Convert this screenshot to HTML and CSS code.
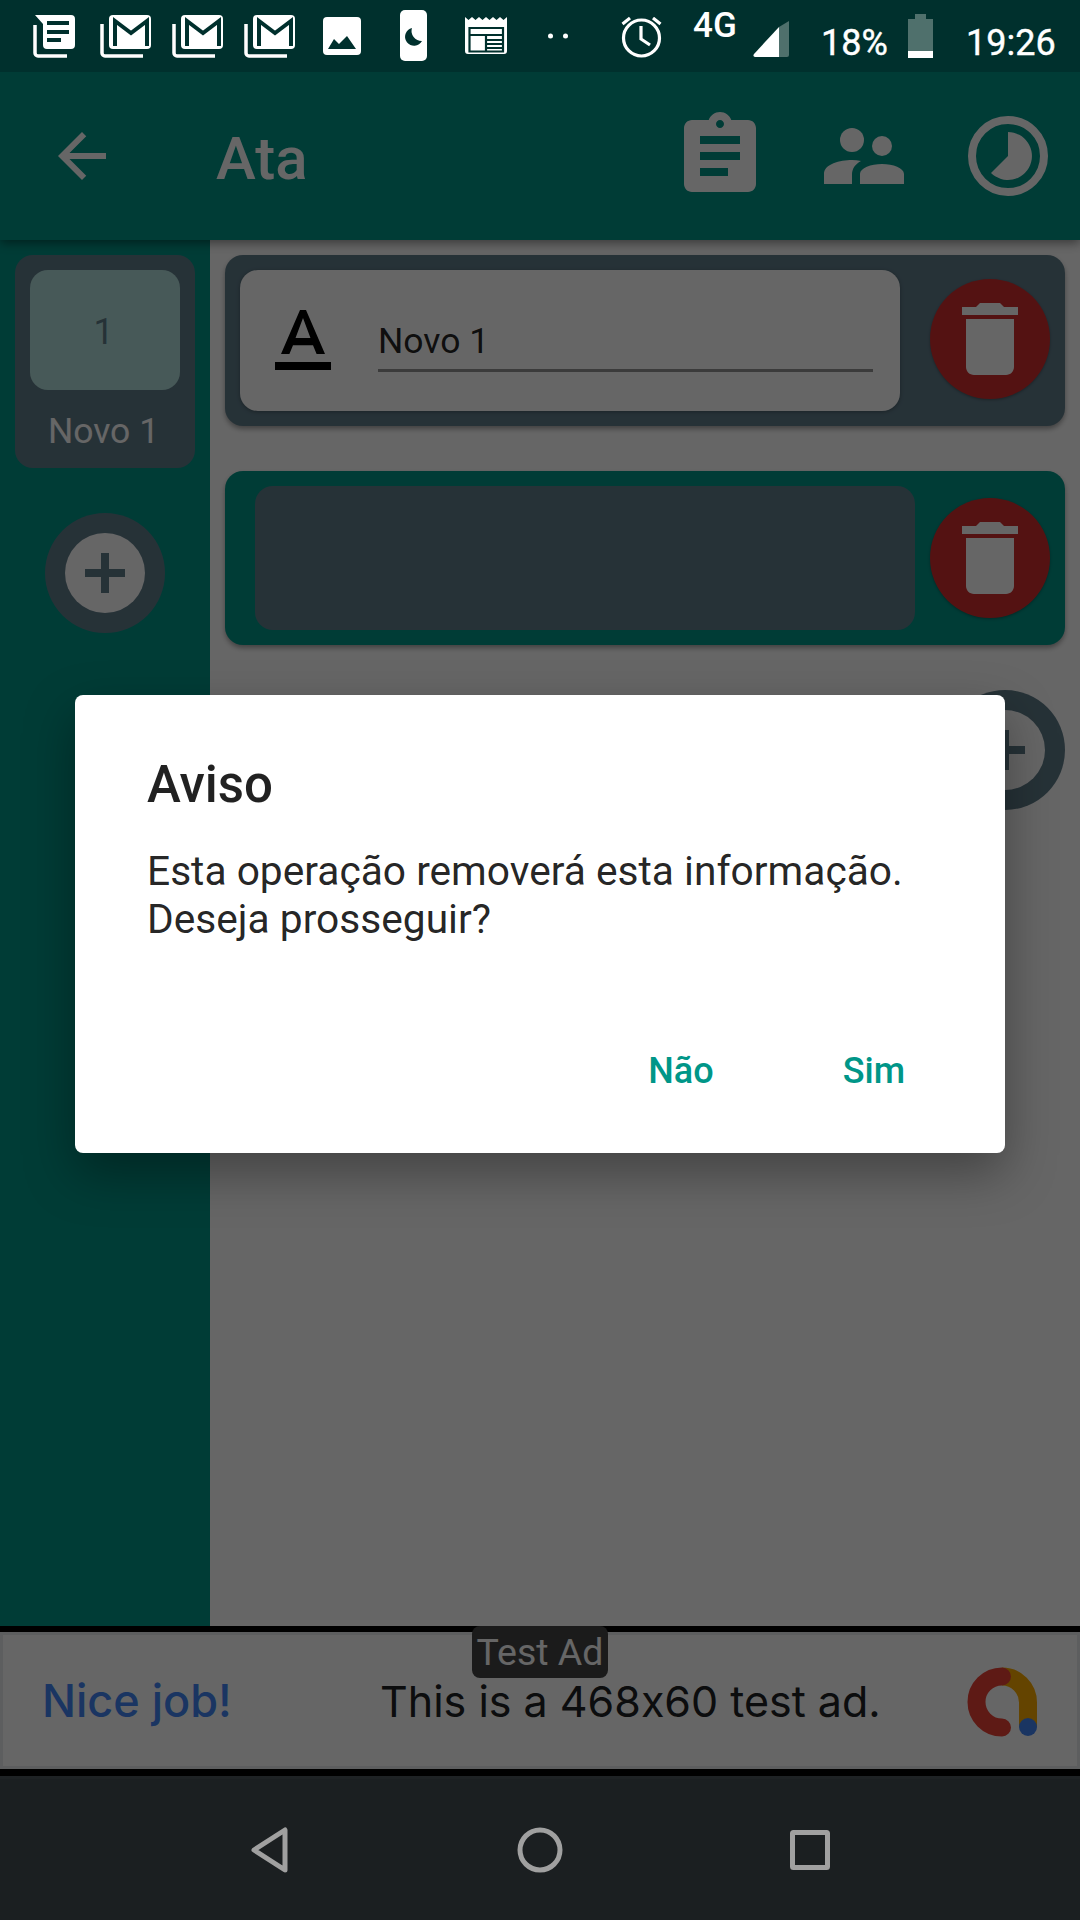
FILE: index.html
```html
<!DOCTYPE html>
<html lang="pt">
<head>
<meta charset="utf-8">
<title>Ata</title>
<link rel="stylesheet" href="styles.css">
</head>
<body>
<div class="phone">
  <header class="status">
    <svg class="si si-bubble" width="42" height="72" viewBox="0 0 42 72"><path class="w" d="M2 15H38a4 4 0 0 1 4 4V45a4 4 0 0 1-4 4H14a4 4 0 0 1-4-4V24z"/><path class="d" d="M14 21h22v4H14zM14 30h22v4H14zM14 38h14v4H14z"/><path class="ol" d="M2 25V53a3 3 0 0 0 3 3H34"/></svg>
    <svg class="si si-mail1" width="51" height="72" viewBox="0 0 51 72"><rect class="w" x="9" y="15" width="42" height="34" rx="4"/><path class="dl" d="M15 46V21L31 33 47 21V46"/><path class="ol" d="M2 24V53a3 3 0 0 0 3 3H43"/></svg>
    <svg class="si si-mail" width="51" height="72" viewBox="0 0 51 72"><rect class="w" x="9" y="15" width="42" height="34" rx="4"/><path class="dl" d="M15 46V21L31 33 47 21V46"/><path class="ol" d="M2 24V53a3 3 0 0 0 3 3H43"/></svg>
    <svg class="si si-mail" width="51" height="72" viewBox="0 0 51 72"><rect class="w" x="9" y="15" width="42" height="34" rx="4"/><path class="dl" d="M15 46V21L31 33 47 21V46"/><path class="ol" d="M2 24V53a3 3 0 0 0 3 3H43"/></svg>
    <svg class="si si-pic" width="38" height="72" viewBox="0 0 38 72"><rect class="w" x="0" y="17" width="38" height="38" rx="4"/><path class="d" d="M5 49 11 39 16 44 24 36 33 49z"/></svg>
    <svg class="si si-moon" width="27" height="72" viewBox="0 0 27 72"><rect class="w" x="0" y="10" width="27" height="51" rx="5"/><path class="d" d="M12 28a9 9 0 1 0 10 13 10 10 0 0 1-10-13z"/></svg>
    <svg class="si si-news" width="42" height="72" viewBox="0 0 42 72"><path class="w" d="M0 17l3.500 3 3.500-3 3.500 3 3.500-3 3.500 3 3.500-3 3.500 3 3.500-3 3.500 3 3.500-3 3.500 3 3.500-3V51a3 3 0 0 1-3 3H3a3 3 0 0 1-3-3z"/><path class="nl" d="M4.500 28H38V51.500H4.500zM4.500 35H38M21 35V51.500M21 40H38M21 44H38M21 48H38"/></svg>
    <svg class="si si-dots" width="20" height="72" viewBox="0 0 20 72"><circle class="w" cx="2.500" cy="36" r="2.500"/><circle class="w" cx="17.500" cy="36" r="2.500"/></svg>
    <svg class="si si-alarm" width="41" height="72" viewBox="0 0 41 72"><circle class="al" cx="20.500" cy="38" r="18"/><path class="al" d="M20 26V39L29 45M1.500 24 9 18M39.500 24 32 18"/></svg>
    <span class="st-4g">4G</span>
    <svg class="si si-signal" width="36" height="72" viewBox="0 0 36 72"><path class="ghost" d="M26 27 36 21V55a2 2 0 0 1-2 2H26z"/><path class="w" d="M26 27V57H2a2 2 0 0 1-1-3z"/></svg>
    <span class="st-text st-pct">18%</span>
    <svg class="si si-batt" width="25" height="72" viewBox="0 0 25 72"><path class="ghost" d="M7 14H18V19H25V51H0V19H7z"/><rect class="w" x="0" y="51" width="25" height="7"/></svg>
    <span class="st-text st-time">19:26</span>
  </header>

  <div class="app">
    <div class="appbar">
      <svg class="ab-back" width="72" height="72" viewBox="0 0 24 24"><path d="M20 11H7.830l5.590-5.590L12 4l-8 8 8 8 1.410-1.410L7.830 13H20v-2z"/></svg>
      <h1 class="ab-title">Ata</h1>
      <svg class="ab-clip" width="96" height="96" viewBox="0 0 24 24"><path d="M19 3h-4.180C14.400 1.840 13.300 1 12 1c-1.300 0-2.400.84-2.820 2H5c-1.100 0-2 .9-2 2v14c0 1.100.9 2 2 2h14c1.100 0 2-.9 2-2V5c0-1.100-.9-2-2-2zm-7 0c.55 0 1 .45 1 1s-.45 1-1 1-1-.45-1-1 .45-1 1-1zm2 14H7v-2h7v2zm3-4H7v-2h10v2zm0-4H7V7h10v2z"/></svg>
      <svg class="ab-people" width="80" height="56" viewBox="0 0 80 56"><circle cx="28" cy="12" r="12"/><circle cx="58" cy="18" r="10"/><path d="M0 56V46C0 36 16 32 28 32c3 0 6 .3 9 .9C31 36 28 41 28 46V56zM36 56V46C36 40 47 36 58 36S80 40 80 46V56z"/></svg>
      <svg class="ab-time" width="80" height="80" viewBox="0 0 80 80"><circle class="ring" cx="40" cy="40" r="36"/><path d="M40 16a24 24 0 1 1-17 41L40 40z"/></svg>
    </div>

    <div class="main">
      <aside class="side">
        <div class="tab">
          <div class="thumb">1</div>
          <div class="tab-label">Novo 1</div>
        </div>
        <button class="add" type="button" aria-label="Adicionar"><span class="add-in"><svg width="40" height="40" viewBox="0 0 40 40"><path d="M16 0h8v16h16v8H24v16h-8V24H0v-8h16z"/></svg></span></button>
      </aside>
      <section class="content">
        <div class="row row-a">
          <div class="field-card">
            <svg class="a-icon" width="96" height="96" viewBox="0 0 24 24"><path d="M5 17v2h14v-2H5zm4.500-4.200h5l.9 2.200h2.100L12.750 4h-1.500L6.500 15h2.100l.9-2.200zM12 5.980L13.870 11h-3.740L12 5.980z"/></svg>
            <div class="field">Novo 1</div>
          </div>
          <button class="del del-a" type="button" aria-label="Excluir"><svg width="96" height="96" viewBox="0 0 24 24"><path d="M6 19c0 1.100.9 2 2 2h8c1.100 0 2-.9 2-2V7H6v12zM19 4h-3.500l-1-1h-5l-1 1H5v2h14V4z"/></svg></button>
        </div>
        <div class="row row-b">
          <div class="empty-card"></div>
          <button class="del" type="button" aria-label="Excluir"><svg width="96" height="96" viewBox="0 0 24 24"><path d="M6 19c0 1.100.9 2 2 2h8c1.100 0 2-.9 2-2V7H6v12zM19 4h-3.500l-1-1h-5l-1 1H5v2h14V4z"/></svg></button>
        </div>
        <button class="add add-right" type="button" aria-label="Adicionar"><span class="add-in"><svg width="40" height="40" viewBox="0 0 40 40"><path d="M16 0h8v16h16v8H24v16h-8V24H0v-8h16z"/></svg></span></button>
      </section>
    </div>

    <div class="adstrip">
      <div class="ad">
        <span class="ad-title">Nice job!</span>
        <span class="ad-text">This is a 468x60 test ad.</span>
        <svg class="ad-logo" width="70" height="70" viewBox="0 0 70 70"><path class="lg-y" d="M35 9.500A26 26 0 0 1 61 35.500V60"/><path class="lg-r" d="M35 9.500A25.500 25.500 0 0 0 35 60.500"/><circle class="lg-b" cx="61" cy="60" r="9"/></svg>
      </div>
      <div class="ad-badge">Test Ad</div>
    </div>
  </div>

  <nav class="nav">
    <svg class="nv nv-back" width="42" height="48" viewBox="0 0 42 48"><path d="M37 4V44L6 24z"/></svg>
    <svg class="nv nv-home" width="48" height="48" viewBox="0 0 48 48"><circle cx="24" cy="24" r="20"/></svg>
    <svg class="nv nv-rec" width="42" height="42" viewBox="0 0 42 42"><rect x="3.500" y="3.500" width="35" height="35" rx="1"/></svg>
  </nav>

  <div class="scrim"></div>

  <div class="dialog" role="dialog">
    <h2 class="dlg-title">Aviso</h2>
    <p class="dlg-body">Esta operação removerá esta informação.<br>Deseja prosseguir?</p>
    <div class="dlg-actions">
      <span class="dlg-btn">Não</span>
      <span class="dlg-btn dlg-btn-yes">Sim</span>
    </div>
  </div>
</div>
</body>
</html>
```

FILE: styles.css
```css
* { box-sizing: border-box; }
html, body { margin: 0; padding: 0; }
body { width: 1080px; height: 1920px; overflow: hidden; background: #000; font-family: Roboto, "Noto Sans", sans-serif; }
.phone { position: relative; width: 1080px; height: 1920px; display: flex; flex-direction: column; }

/* status bar */
.status { position: relative; z-index: 3; height: 72px; flex: none; background: #00302d; display: flex; padding-left: 33px; color: #fff; }
.si { display: block; flex: none; }
.w { fill: #fff; }
.d { fill: #00302d; }
.dl { fill: none; stroke: #00302d; stroke-width: 4; }
.ol { fill: none; stroke: #fff; stroke-width: 3.500; }
.nl { fill: none; stroke: #00302d; stroke-width: 2.200; }
.al { fill: none; stroke: #fff; stroke-width: 3.200; }
.ghost { fill: #4f706c; }
.si-mail1 { margin-left: 25px; }
.si-mail { margin-left: 21px; }
.si-pic { margin-left: 28px; }
.si-moon { margin-left: 39px; }
.si-news { margin-left: 38px; }
.si-dots { margin-left: 41px; }
.si-alarm { margin-left: 53px; }
.st-4g { margin-left: 31px; width: 44px; font-size: 35px; font-weight: 500; line-height: 52px; white-space: nowrap; }
.si-signal { margin-left: 16px; }
.st-text { font-size: 36px; line-height: 86px; white-space: nowrap; -webkit-text-stroke: .4px #fff; }
.st-pct { margin-left: 32px; width: 64px; }
.si-batt { margin-left: 23px; }
.st-time { margin-left: 33px; }

/* app */
.app { height: 1704px; flex: none; display: flex; flex-direction: column; background: #fff; }
.appbar { position: relative; z-index: 1; height: 168px; flex: none; background: #009688; box-shadow: 0 3px 10px rgba(0,0,0,.45); display: flex; align-items: center; color: #fff; fill: #fff; }
.ab-back { margin-left: 46px; flex: none; }
.ab-title { margin: 0 0 0 98px; font-size: 60px; font-weight: 500; line-height: 72px; flex: none; padding-top: 5px; }
.ab-clip { margin-left: auto; flex: none; }
.ab-people { margin-left: 56px; flex: none; }
.ab-time { margin-left: 64px; margin-right: 32px; flex: none; }
.ring { fill: none; stroke: #fff; stroke-width: 8; }

.main { flex: 1; display: flex; min-height: 0; }
.side { width: 210px; flex: none; background: #009688; padding: 15px; display: flex; flex-direction: column; align-items: center; gap: 45px; }
.tab { width: 180px; height: 213px; background: #607d8b; border-radius: 18px; padding: 15px; display: flex; flex-direction: column; align-items: center; }
.thumb { width: 150px; height: 120px; flex: none; background: #b2dfdb; border-radius: 18px; color: #607d8b; font-size: 36px; display: flex; align-items: center; justify-content: center; padding: 3px 3px 0 0; }
.tab-label { margin-top: 17px; color: #fff; font-size: 35.500px; line-height: 48px; white-space: nowrap; padding-right: 3px; }

button { border: 0; padding: 0; font: inherit; }
.add { width: 120px; height: 120px; flex: none; border-radius: 50%; background: #607d8b; display: flex; align-items: center; justify-content: center; }
.add-in { width: 80px; height: 80px; border-radius: 50%; background: #fff; display: flex; align-items: center; justify-content: center; }
.add-in svg { display: block; fill: #607d8b; }

.content { flex: 1; padding: 15px; display: flex; flex-direction: column; gap: 45px; align-items: flex-end; }
.row { width: 840px; display: flex; align-items: center; justify-content: space-between; border-radius: 18px; padding: 15px; box-shadow: 0 3px 5px rgba(0,0,0,.35); }
.row-a { height: 171px; background: #607d8b; }
.row-b { height: 174px; background: #009688; padding-left: 30px; }
.field-card { width: 660px; height: 141px; background: #fff; border-radius: 18px; display: flex; align-items: flex-end; padding: 0 0 39px 15px; box-shadow: 0 1px 4px rgba(0,0,0,.3); }
.a-icon { display: block; flex: none; margin-bottom: -18px; fill: #000; margin-top: -30px; }
.field { width: 495px; margin-left: 27px; border-bottom: 3px solid #939393; color: rgba(0,0,0,.87); font-size: 35.500px; line-height: 48px; padding-bottom: 4px; }
.empty-card { width: 660px; height: 144px; background: #607d8b; border-radius: 18px; }
.del { width: 120px; height: 120px; flex: none; border-radius: 50%; background: #d32f2f; display: flex; align-items: center; justify-content: center; box-shadow: 0 1px 3px rgba(0,0,0,.3); }
.del svg { display: block; fill: #fff; }
.del-a { margin-top: -3px; }

/* ad */
.adstrip { position: relative; flex: none; height: 150px; background: #000; padding: 6px 0 7px; }
.ad { height: 137px; background: #fff; border: 3px solid #e8eaed; display: flex; align-items: center; padding-left: 39px; position: relative; font-feature-settings: "calt" 0; }
.ad-title { width: 338px; flex: none; color: #4285f4; font-family: Inter, sans-serif; font-size: 45px; font-weight: 500; line-height: 40px; white-space: nowrap; }
.ad-text { width: 587px; flex: none; color: #202124; font-family: Inter, sans-serif; font-size: 43px; line-height: 40px; white-space: nowrap; }
.ad-logo { display: block; flex: none; margin-top: 3px; }
.lg-y { fill: none; stroke: #f9ab00; stroke-width: 18; }
.lg-r { fill: none; stroke: #ea4335; stroke-width: 18; stroke-linecap: round; }
.lg-b { fill: #4285f4; }
.ad-badge { position: absolute; left: 472px; top: 0; width: 136px; height: 52px; padding-top: 6px; background: #444; border-radius: 8px; color: #fff; font-size: 37.500px; line-height: 40px; text-align: center; white-space: nowrap; }

/* scrim + dialog */
.scrim { position: absolute; left: 0; right: 0; top: 72px; height: 1704px; background: rgba(0,0,0,.6); z-index: 2; }
.dialog { position: absolute; z-index: 4; left: 75px; top: 695px; width: 930px; height: 458px; background: #fff; border-radius: 8px; box-shadow: 0 20px 50px rgba(0,0,0,.35); padding: 60px 73px 0 72px; color: rgba(0,0,0,.87); }
.dlg-title { margin: 0; font-size: 51px; font-weight: 500; line-height: 60px; }
.dlg-body { margin: 32px 0 0; font-size: 40.700px; line-height: 48px; }
.dlg-actions { display: flex; justify-content: flex-end; gap: 129px; margin: 104px 27px 0 0; }
.dlg-btn { color: #009688; font-size: 36px; font-weight: 500; line-height: 48px; }

/* nav */
.nav { position: relative; height: 144px; flex: none; background: #1b1f21; border-top: 3px solid #1e2224; display: flex; align-items: center; }
.nv { display: block; flex: none; fill: none; stroke: #a0a0a0; stroke-width: 5; stroke-linejoin: round; }
.nv-back { margin-left: 248px; }
.nv-home { margin-left: 226px; }
.nv-rec { margin-left: 225px; }
```
